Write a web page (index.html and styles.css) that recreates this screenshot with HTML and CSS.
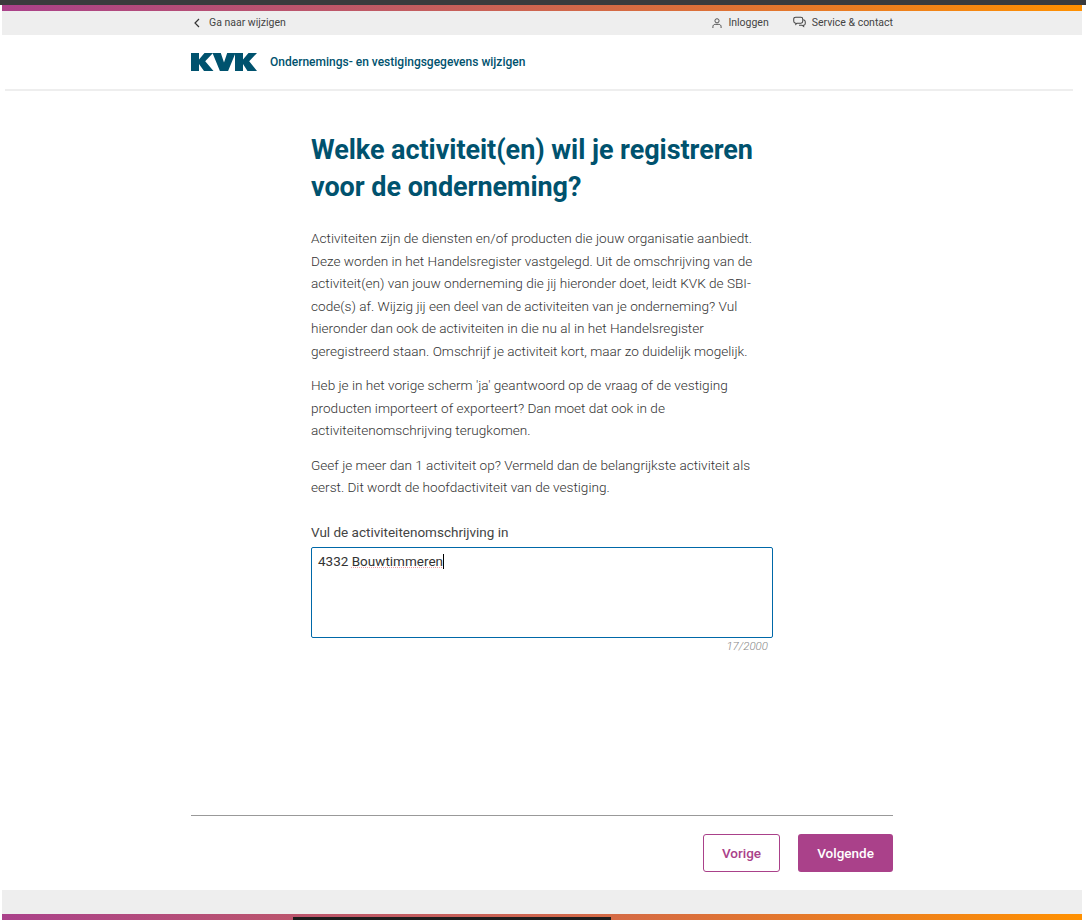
FILE: index.html
```html
<!DOCTYPE html>
<html lang="nl">
<head>
  <meta charset="UTF-8">
  <meta name="viewport" content="width=device-width, initial-scale=1.0">
  <title>Ondernemings- en vestigingsgegevens wijzigen</title>
  <link rel="stylesheet" href="styles.css">
</head>
<body>
  <div class="browser-bar"></div>
  <div class="page">
    <div class="gradient-bar"></div>
    <div class="topbar">
      <div class="wrap topbar-inner">
        <a href="#" class="top-link">
          <svg class="icon-back" width="6" height="10" viewBox="0 0 6 10"><path d="M5 1 1 5l4 4" fill="none" stroke="#333" stroke-width="1.2"/></svg>
          Ga naar wijzigen
        </a>
        <div class="top-right">
          <a href="#" class="top-link">
            <svg width="10" height="12" viewBox="0 0 11 12" fill="none" stroke="#444" stroke-width="1"><circle cx="5.500" cy="3.600" r="2.300"/><path d="M1 11.500V10c0-1.500 1.100-2.500 2.500-2.500h4C8.900 7.500 10 8.500 10 10v1.500"/></svg>
            Inloggen
          </a>
          <a href="#" class="top-link">
            <svg width="13" height="13" viewBox="0 0 14 13" fill="none" stroke="#444" stroke-width="1.100"><path d="M3 .8h5.500c1.200 0 2 .8 2 2v2.400c0 1.200-.8 2-2 2H4.500L3 8.500V7.200C1.500 7.200.8 6.400.8 5.200V2.800C.8 1.600 1.800.8 3 .8z"/><path d="M11 3.500c1.300.2 2.200 1 2.200 2.200v1.800c0 1-.6 1.800-1.700 1.900v1.400l-1.800-1.400H6.500"/></svg>
            Service &amp; contact
          </a>
        </div>
      </div>
    </div>

    <header class="wrap site-header">
      <svg class="logo" width="66" height="18" viewBox="0 0 66 18" fill="#00526e">
        <path d="M0 0h8v6.500L13.500 0H22l-7.800 8.300L22.500 18H13L8 11v7H0z"/>
        <path d="M21.500 0h8.300L33 9.500 36.200 0h8.300l-7.400 18h-8.200z"/>
        <path d="M44 0h8v6.500L57.500 0H66l-7.800 8.300L66 18h-9.500L52 11v7h-8z"/>
      </svg>
      <span class="site-title">Ondernemings- en vestigingsgegevens wijzigen</span>
    </header>

    <main class="content">
      <h1>Welke activiteit(en) wil je registreren<br>voor de onderneming?</h1>
      <p>Activiteiten zijn de diensten en/of producten die jouw organisatie aanbiedt. Deze worden in het Handelsregister vastgelegd. Uit de omschrijving van de activiteit(en) van jouw onderneming die jij hieronder doet, leidt KVK de SBI-code(s) af. Wijzig jij een deel van de activiteiten van je onderneming? Vul hieronder dan ook de activiteiten in die nu al in het Handelsregister geregistreerd staan. Omschrijf je activiteit kort, maar zo duidelijk mogelijk.</p>
      <p>Heb je in het vorige scherm 'ja' geantwoord op de vraag of de vestiging producten importeert of exporteert? Dan moet dat ook in de activiteitenomschrijving terugkomen.</p>
      <p>Geef je meer dan 1 activiteit op? Vermeld dan de belangrijkste activiteit als eerst. Dit wordt de hoofdactiviteit van de vestiging.</p>

      <label class="field-label">Vul de activiteitenomschrijving in</label>
      <div class="textarea">4332 <span class="misspelled">Bouwtimmeren</span><span class="caret"></span></div>
      <div class="counter">17/2000</div>
    </main>

    <div class="wrap actions">
      <button class="btn btn-outline">Vorige</button>
      <button class="btn btn-primary">Volgende</button>
    </div>

    <div class="footer-grey"></div>
    <div class="gradient-bar footer-bar"><div class="video-edge"></div></div>
  </div>
</body>
</html>
```

FILE: styles.css
```css
html, body {
  margin: 0;
  padding: 0;
  height: 920px;
  overflow: hidden;
  background-color: #ffffff;
}
body {
  font-family: Roboto, Arial, sans-serif;
  color: #444;
}
.browser-bar {
  height: 5px;
  background-color: #3a3b3d;
}
.page {
  margin: 0 4px 0 2px;
  height: 915px;
  display: flex;
  flex-direction: column;
}
.gradient-bar {
  height: 6px;
  flex-shrink: 0;
  background: linear-gradient(90deg, #aa418a 0%, #c05a64 35%, #dc7038 65%, #ff9000 100%);
}
.wrap {
  width: 702px;
  margin-left: 189px;
  box-sizing: border-box;
}
.topbar {
  height: 24px;
  background-color: #eeeeee;
}
.topbar-inner {
  height: 23px;
  display: flex;
  justify-content: space-between;
  align-items: center;
}
.top-right {
  display: flex;
  gap: 24px;
}
.top-link {
  display: flex;
  align-items: center;
  gap: 6px;
  font-size: 10.5px;
  color: #444;
  text-decoration: none;
}
.icon-back {
  margin: 0 3px 0 3px;
}
.site-header {
  height: 54px;
  padding-bottom: 1px;
  display: flex;
  align-items: center;
  gap: 13px;
}
.site-title {
  font-size: 12px;
  font-weight: 500;
  color: #00526e;
}
.content {
  flex: 1;
  border-top: 2px solid #eeeeee;
  margin: 0 9px 0 3px;
  padding: 41px 300px 0 306px;
}
h1 {
  font-family: Roboto, Arial, sans-serif;
  font-size: 27px;
  line-height: 37px;
  letter-spacing: -0.05px;
  font-weight: 700;
  color: #00526e;
  margin: 0 0 21px;
  white-space: nowrap;
}
p {
  font-size: 13.6px;
  line-height: 22.5px;
  font-weight: 300;
  color: #333;
  margin: 0 0 12px;
}
.field-label {
  display: block;
  font-size: 13.5px;
  color: #444;
  margin-top: 25px;
  margin-bottom: 7px;
}
.textarea {
  width: 462px;
  height: 91px;
  border: 1px solid #0068a8;
  border-radius: 2px;
  box-sizing: border-box;
  padding: 5px 6px;
  font-size: 13.5px;
  line-height: 17px;
  color: #333;
}
.misspelled {
  text-decoration: underline dotted #f0a0a8 1px;
  text-underline-offset: 1px;
}
.caret {
  display: inline-block;
  width: 1px;
  height: 15px;
  background-color: #000;
  vertical-align: -3px;
}
.counter {
  width: 457px;
  text-align: right;
  font-size: 11.5px;
  font-style: italic;
  font-weight: 300;
  color: #888;
  margin-top: 1px;
}
.actions {
  border-top: 1px solid #999;
  padding: 18px 0;
  display: flex;
  justify-content: flex-end;
  gap: 18px;
}
.btn {
  height: 38px;
  font-family: Roboto, Arial, sans-serif;
  font-size: 13.5px;
  font-weight: 500;
  border-radius: 3px;
  box-sizing: border-box;
  cursor: pointer;
}
.btn-outline {
  width: 77px;
  background-color: #ffffff;
  border: 1px solid #aa418a;
  color: #aa418a;
}
.btn-primary {
  width: 95px;
  background-color: #aa418a;
  border: none;
  color: #ffffff;
}
.footer-grey {
  height: 24px;
  flex-shrink: 0;
  background-color: #eeeeee;
}
.footer-bar {
  position: relative;
}
.video-edge {
  position: absolute;
  left: 291px;
  top: 3px;
  width: 318px;
  height: 3px;
  background-color: #1c1c1c;
}
```
